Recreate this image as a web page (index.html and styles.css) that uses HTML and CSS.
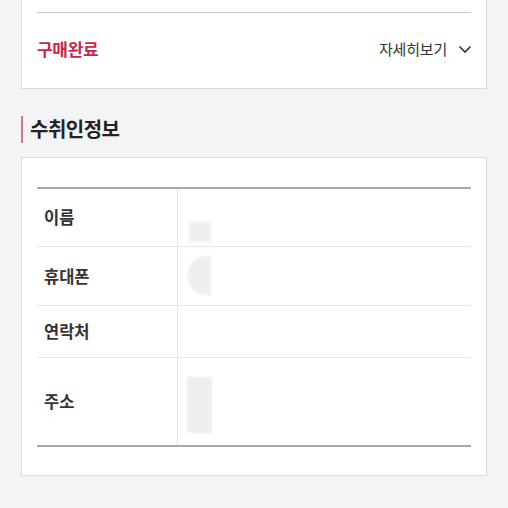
FILE: index.html
```html
<!DOCTYPE html>
<html lang="ko">
<head>
<meta charset="utf-8">
<link rel="stylesheet" href="styles.css">
</head>
<body>
<div class="page">
  <section class="card status-card">
    <div class="status-row">
      <span class="status">구매완료</span>
      <span class="more">자세히보기
        <svg class="chev" width="14" height="9" viewBox="0 0 14 9"><path d="M1.5 1.5 L7 7 L12.5 1.5" fill="none" stroke="#333" stroke-width="1.6"/></svg>
      </span>
    </div>
  </section>

  <h2 class="section-title">수취인정보</h2>

  <section class="card info-card">
    <table class="info">
      <tr class="r-name"><th>이름</th><td><span class="blur b1"></span></td></tr>
      <tr class="r-phone"><th>휴대폰</th><td><span class="blur b2"></span></td></tr>
      <tr class="r-tel"><th>연락처</th><td></td></tr>
      <tr class="r-addr"><th>주소</th><td><span class="blur b3"></span></td></tr>
    </table>
  </section>
</div>
</body>
</html>
```

FILE: styles.css
```css
* { box-sizing: border-box; }
html, body { margin: 0; padding: 0; }
body {
  background: #f4f4f4;
  font-family: "Noto Sans CJK KR", "Noto Sans", sans-serif;
  color: #222;
}
.page {
  padding: 0 21px;
}
.card {
  background: #fff;
  border: 1px solid #dcdcdc;
}
.status-card {
  border-top: none;
  padding: 12px 15px 0;
}
.status-row {
  border-top: 1px solid #c8c8c8;
  height: 76px;
  display: flex;
  align-items: center;
  justify-content: space-between;
  padding-bottom: 4px;
}
.status {
  color: #c8264f;
  font-weight: 700;
  font-size: 17px;
  letter-spacing: -0.3px;
}
.more {
  display: flex;
  align-items: center;
  gap: 11px;
  font-size: 15px;
  color: #333;
  letter-spacing: -0.2px;
}
.chev { margin-top: 2px; margin-right: -1px; }
.section-title {
  margin: 27px 0 0;
  height: 27px;
  line-height: 25px;
  border-left: 2px solid #c97890;
  padding-left: 7px;
  font-size: 20px;
  font-weight: 700;
  color: #222;
  letter-spacing: -0.5px;
}
.info-card {
  margin-top: 14px;
  padding: 29px 15px 28px;
}
.info {
  width: 100%;
  border-collapse: collapse;
  border-top: 2px solid #a9a9a9;
  border-bottom: 2px solid #a9a9a9;
}
.info th, .info td {
  border-bottom: 1px solid #e6e6e6;
  padding: 0;
}
.info tr:last-child th, .info tr:last-child td { border-bottom: none; }
.info th {
  width: 140px;
  text-align: left;
  padding-left: 7px;
  font-size: 16.5px;
  font-weight: 600;
  color: #333;
  border-right: 1px solid #e6e6e6;
}
.info td { position: relative; }
.r-name { height: 58px; }
.r-phone { height: 59px; }
.r-tel { height: 52px; }
.r-addr { height: 89px; }
.blur {
  position: absolute;
  background: #efefef;
  filter: blur(1px);
}
.b1 { left: 11px; top: 33px; width: 22px; height: 20px; }
.b2 { left: 9px; top: 9px; width: 24px; height: 39px; border-radius: 24px 0 0 24px; }
.b3 { left: 9px; top: 19px; width: 25px; height: 56px; }
```
